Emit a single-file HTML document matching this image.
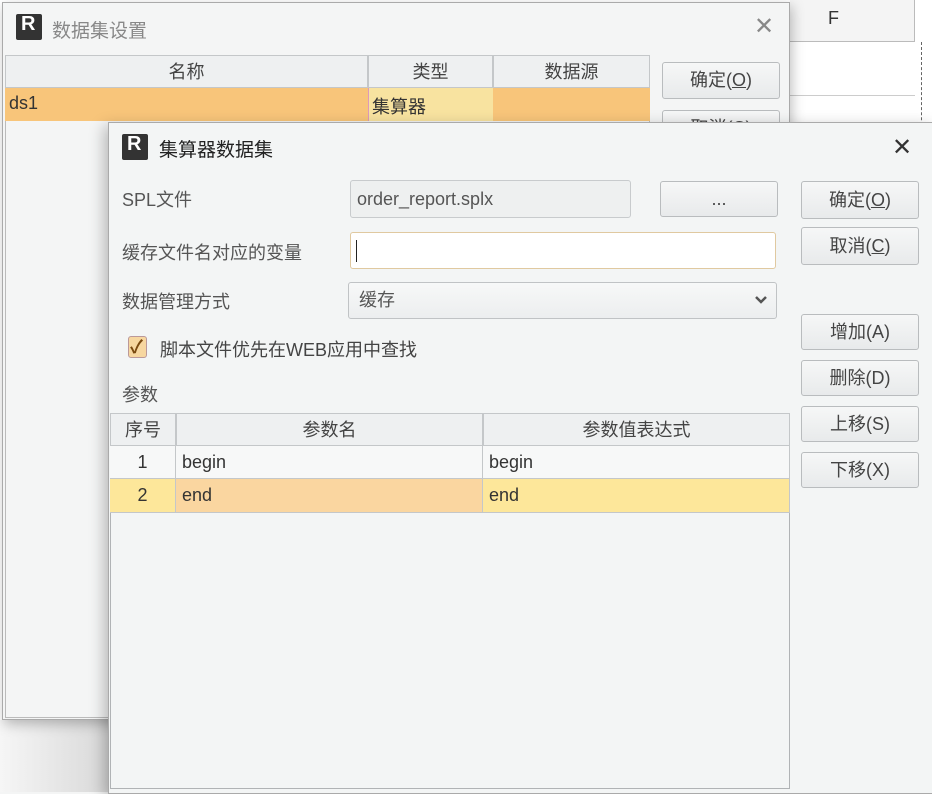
<!DOCTYPE html>
<html><head><meta charset="utf-8"><style>
*{box-sizing:border-box;margin:0;padding:0}
body{width:932px;height:792px;overflow:hidden;background:#f4f5f5;font-family:"Liberation Sans","Noto Sans CJK SC",sans-serif;font-size:18px;color:#333;position:relative}
.a{position:absolute}
.btn{position:absolute;border:1px solid #b9bcbe;border-radius:3px;background:linear-gradient(#f6f7f7,#e8eaeb);text-align:center;color:#444;font-size:18px}
.hd{background:#eef0f1;border:1px solid #c4c7c9;text-align:center;color:#444}
.cell{position:absolute;border-right:1px solid #c4c7c9;border-bottom:1px solid #c4c7c9;padding-left:6px;line-height:32px}
.icon{position:absolute;width:26px;height:26px;background:#333;border-radius:2px}
.icon:after{content:"R";position:absolute;left:5px;top:-1px;color:#fff;font-weight:bold;font-size:20px;font-family:"Liberation Sans",sans-serif}
</style></head><body>
<div class="a" style="left:0;top:0;width:932px;height:792px;background:#fff"></div>
<div class="a" style="left:790px;top:0;width:125px;height:42px;border-bottom:1px solid #bbb;border-right:1px solid #bbb;background:#f4f4f4"></div>
<div class="a" style="left:828px;top:8px;font-size:18px">F</div>
<div class="a" style="left:790px;top:95px;width:125px;border-top:1px solid #ccc"></div>
<div class="a" style="left:921px;top:42px;height:750px;border-left:1px dashed #666"></div>
<div class="a" style="left:0;top:720px;width:110px;height:72px;background:linear-gradient(90deg,#f6f6f6,#d8d8d8)"></div>
<div class="a" style="left:2px;top:2px;width:788px;height:718px;background:#f4f5f5;border:1px solid #aaa;box-shadow:2px 4px 12px rgba(0,0,0,.25)"></div>
<div class="icon" style="left:16px;top:14px"></div>
<div class="a" style="left:52px;top:16px;color:#888;font-size:19px">数据集设置</div>
<div class="a" style="left:754px;top:12px;color:#888;font-size:24px">✕</div>
<div class="a" style="left:5px;top:55px;width:645px;height:663px;background:#f4f5f5;border:1px solid #bbb"></div>
<div class="a hd" style="left:5px;top:55px;width:363px;height:33px;line-height:33px">名称</div>
<div class="a hd" style="left:368px;top:55px;width:125px;height:33px;line-height:33px">类型</div>
<div class="a hd" style="left:493px;top:55px;width:157px;height:33px;line-height:33px">数据源</div>
<div class="a" style="left:5px;top:88px;width:645px;height:33px;background:#f8c57a"></div>
<div class="a" style="left:368px;top:88px;width:125px;height:33px;background:#f8e3a0;border-left:1px solid #d9b;"></div>
<div class="a" style="left:9px;top:93px">ds1</div>
<div class="a" style="left:372px;top:93px">集算器</div>
<div class="btn" style="left:662px;top:62px;width:118px;height:37px;line-height:35px">确定(<u>O</u>)</div>
<div class="btn" style="left:662px;top:110px;width:118px;height:30px;line-height:35px">取消(C)</div>
<div class="a" style="left:108px;top:122px;width:826px;height:672px;background:#f3f5f5;border:1px solid #aaa;box-shadow:-4px 4px 14px rgba(0,0,0,.25)"></div>
<div class="icon" style="left:122px;top:134px"></div>
<div class="a" style="left:159px;top:135px;font-size:19px;color:#222">集算器数据集</div>
<div class="a" style="left:892px;top:133px;color:#333;font-size:24px">✕</div>
<div class="a" style="left:122px;top:186px;color:#555">SPL文件</div>
<div class="a" style="left:350px;top:180px;width:281px;height:38px;border:1px solid #c8cbcd;border-radius:3px;background:#eef0f0;padding-left:6px;line-height:36px;color:#555">order_report.splx</div>
<div class="btn" style="left:660px;top:181px;width:118px;height:36px;line-height:34px">...</div>
<div class="btn" style="left:801px;top:181px;width:118px;height:38px;line-height:36px">确定(<u>O</u>)</div>
<div class="a" style="left:122px;top:239px;color:#555">缓存文件名对应的变量</div>
<div class="a" style="left:350px;top:232px;width:426px;height:37px;border:1px solid #e0c9a0;border-radius:3px;background:#fff"></div>
<div class="a" style="left:356px;top:240px;width:1px;height:22px;background:#222"></div>
<div class="btn" style="left:801px;top:227px;width:118px;height:38px;line-height:36px">取消(<u>C</u>)</div>
<div class="a" style="left:122px;top:288px;color:#555">数据管理方式</div>
<div class="a" style="left:348px;top:282px;width:429px;height:37px;border:1px solid #c0c3c5;border-radius:3px;background:linear-gradient(#f7f8f8,#eceeef);padding-left:10px;line-height:35px;color:#555">缓存</div>
<svg class="a" style="left:754px;top:294px" width="14" height="12" viewBox="0 0 14 12"><path d="M2 3 L7 8 L12 3" stroke="#555" stroke-width="2.5" fill="none"/></svg>
<div class="a" style="left:128px;top:336px;width:19px;height:22px;border:1px solid #b99;border-radius:3px;background:#f7d7a0"></div>
<div class="a" style="left:130px;top:333px;color:#7a4a10;font-size:18px;font-weight:bold">✓</div>
<div class="a" style="left:160px;top:336px;color:#444">脚本文件优先在WEB应用中查找</div>
<div class="btn" style="left:801px;top:314px;width:118px;height:36px;line-height:34px">增加(A)</div>
<div class="btn" style="left:801px;top:360px;width:118px;height:36px;line-height:34px">删除(D)</div>
<div class="btn" style="left:801px;top:406px;width:118px;height:36px;line-height:34px">上移(S)</div>
<div class="btn" style="left:801px;top:452px;width:118px;height:36px;line-height:34px">下移(X)</div>
<div class="a" style="left:122px;top:381px;color:#555">参数</div>
<div class="a" style="left:110px;top:413px;width:680px;height:376px;border:1px solid #b0b3b5;background:#f3f5f5"></div>
<div class="a hd" style="left:110px;top:413px;width:66px;height:33px;line-height:33px">序号</div>
<div class="a hd" style="left:176px;top:413px;width:307px;height:33px;line-height:33px">参数名</div>
<div class="a hd" style="left:483px;top:413px;width:307px;height:33px;line-height:33px">参数值表达式</div>
<div class="cell" style="left:110px;top:446px;width:66px;height:33px;text-align:center;padding:0;background:#f7f8f8">1</div>
<div class="cell" style="left:176px;top:446px;width:307px;height:33px;background:#f7f8f8">begin</div>
<div class="cell" style="left:483px;top:446px;width:307px;height:33px;background:#f7f8f8">begin</div>
<div class="cell" style="left:110px;top:479px;width:66px;height:34px;text-align:center;padding:0;background:#fde79a">2</div>
<div class="cell" style="left:176px;top:479px;width:307px;height:34px;background:#fad6a0">end</div>
<div class="cell" style="left:483px;top:479px;width:307px;height:34px;background:#fde79a">end</div>
</body></html>
